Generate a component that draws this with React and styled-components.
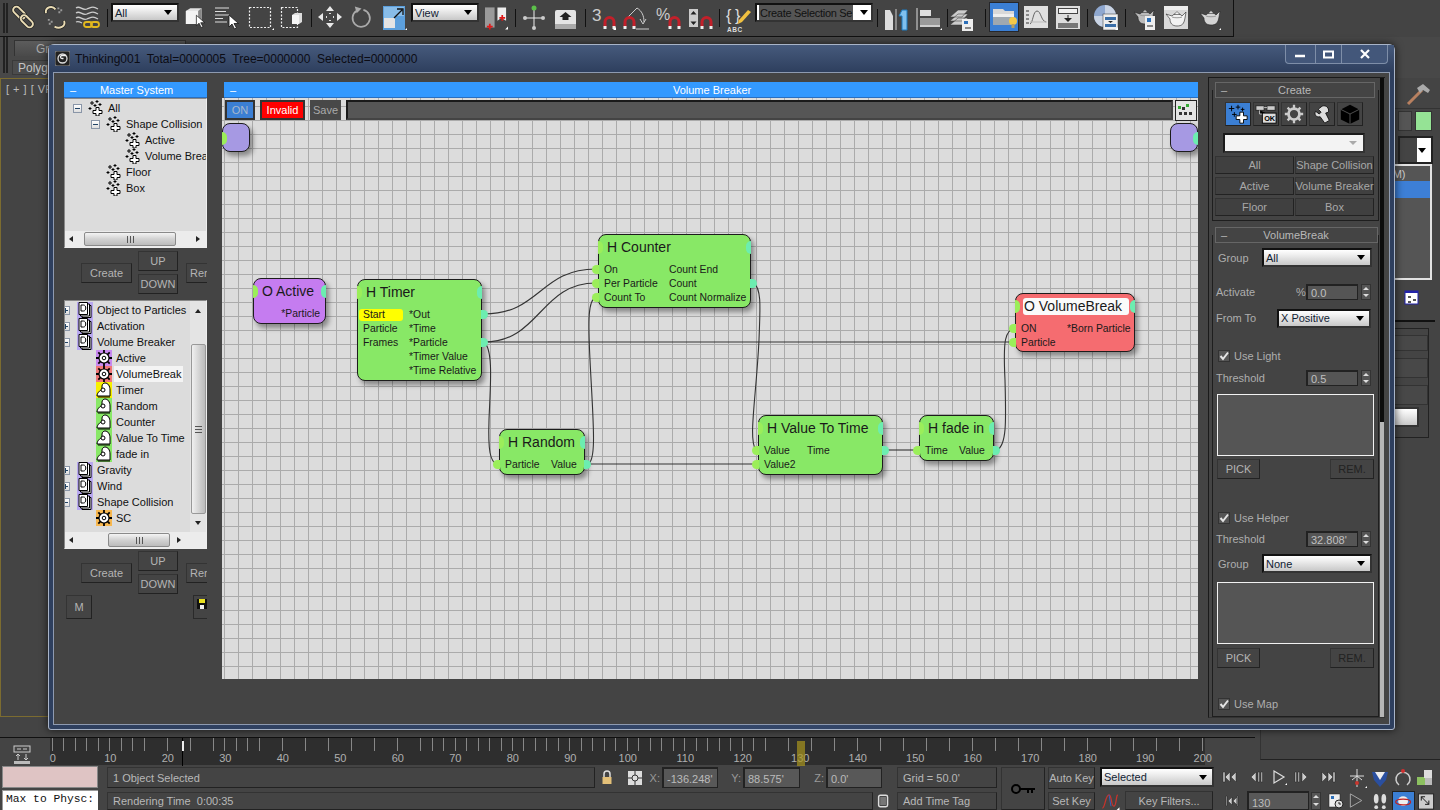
import React from 'react';
import styled, { createGlobalStyle } from 'styled-components';

const Global = createGlobalStyle`
  html, body { margin: 0; padding: 0; background: #444; overflow: hidden; }
  * { box-sizing: border-box; }
`;

const Root = styled.div`
  position: relative; width: 1440px; height: 810px; overflow: hidden; display: flex; flex-direction: column;
  background: #444; color: #b8b8b8; font: 11px/14px "Liberation Sans", Arial, sans-serif;
`;

/* ---------- main toolbar ---------- */
const Toolbar = styled.div`
  width: 1234px; height: 37px; flex: none; display: flex; align-items: flex-start; padding-top: 3px;
  border-bottom: 1px solid #111; border-right: 1px solid #111; background: #444;
`;
const Tool = styled.div`
  flex: none; width: ${p => p.$w || 24}px; height: 26px; margin-left: ${p => p.$ml || 0}px; margin-top: 1px;
  svg { display: block; width: 100%; height: 100%; overflow: visible; }
`;
const ToolActive = styled(Tool)`
  height: 30px; margin-top: -1px; background: #3b7fd4; border: 1px solid #26272b;
`;
const Sep = styled.div`
  flex: none; width: 1px; height: 18px; margin: 6px 0 0 ${p => p.$ml}px; background: #111;
`;
const Grip = styled.div`
  flex: none; width: 5px; height: ${p => p.$h || 30}px; margin-left: 3px; border-left: 2px solid #222; border-right: 2px solid #222;
`;
const Drop = styled.div`
  flex: none; display: flex; align-items: center; justify-content: space-between; width: ${p => p.$w}px; height: ${p => p.$h || 19}px;
  margin-left: ${p => p.$ml || 0}px; padding: 0 5px 0 2px; color: #123; font-size: 11px; white-space: nowrap; overflow: hidden;
  background: linear-gradient(#fff, #f0f0f0 30%, #c8c8c8); border: 2px solid #111; border-right-color: #333; border-bottom-color: #333;
  &::after { content: ""; flex: none; border: 4px solid transparent; border-top: 5px solid #000; border-bottom: 0; margin-left: 4px; }
`;
const MarkedDrop = styled(Drop)`
  padding-right: 3px;
  background: #fff;
  &::after { margin-left: 7px; }
`;
const DropMark = styled.span`
  background: #555; color: #111; flex: 1; padding: 1px 0 1px 1px; overflow: hidden; letter-spacing: -.3px;
`;

/* ---------- application background ---------- */
const Ribbon = styled.div`
  height: 41px; flex: none; display: flex; background: #484848;
`;
const RibbonCol = styled.div`
  display: flex; flex-direction: column; margin-left: 4px; padding-top: 3px; width: 174px;
`;
const RibbonTab = styled.div`
  height: 16px; background: linear-gradient(#5c5c5c, #4a4a4a); border: 1px solid #333; border-bottom: 0; margin-left: 2px; padding: 1px 0 0 21px; color: #aaa; font-size: 12px;
`;
const RibbonBtn = styled.div`
  height: 15px; margin-top: 4px; padding-left: 5px; color: #c4c4c4; font-size: 12px; background: #4c4c4c; border: 1px solid #3a3a3a;
`;
const Work = styled.div`
  flex: none; height: 687px; display: flex;
`;
const WorkLeft = styled.div`
  width: 1260px; flex: none; display: flex; flex-direction: column; height: 687px;
`;
const Viewport = styled.div`
  flex: 1; min-height: 0; margin-bottom: 20px; border: 1px solid #7c6c30; border-right: 0; padding: 3px 0 0 5px; color: #bbb; background: #444;
  word-spacing: 1px;
`;
const CmdPanel = styled.div`
  flex: 1; display: flex; flex-direction: column; height: 682px; border-left: 1px solid #333; border-bottom: 1px solid #222; background: #444;
`;
const CmdTabs = styled.div`
  height: 31px; padding: 4px 0 0 143px; border-bottom: 1px solid #333;
`;
const CmdTab = styled.div`
  width: 28px; height: 24px;
  svg { display: block; width: 100%; height: 100%; }
`;
const SwatchRow = styled.div`
  display: flex; margin-top: 2px; padding-left: 137px; gap: 3px;
`;
const NameField = styled.div`
  width: 14px; height: 20px; background: #555; border: 1px solid #333;
`;
const Swatch = styled.div`
  width: 17px; height: 20px; background: #95e395; border: 1px solid #333;
`;
const CmdDrop = styled(Drop)`
  margin: 5px 0 0 137px; width: 35px; height: 28px; background: linear-gradient(90deg,#444 0,#444 17px,#fff 17px); border: 2px solid #222; justify-content: flex-end;
`;
const CmdList = styled.div`
  margin: 0 0 0 130px; width: 41px; height: 116px; border: 2px solid #e2e2e2; border-left: 0; background: #555; padding-top: 1px; display: flex; flex-direction: column; color: #ccc;
`;
const CmdListText = styled.span`
  margin-left: -2px;
`;
const CmdSel = styled.div`
  height: 17px; background: #3d7fd6;
`;
const CmdIcon = styled.div`
  width: 16px; height: 16px; margin: 10px 0 0 143px;
  svg { display: block; }
`;
const CmdLine = styled.div`
  height: 2px; background: #111; margin: 14px 5px 0 0;
`;
const CmdBox = styled.div`
  margin: 6px 11px 0 0; flex: none; height: 110px; border: 1px solid #222; border-left: 0; padding-top: 6px; display: flex; flex-direction: column; gap: 7px;
`;
const CmdRow = styled.div`
  width: 167px; height: ${p => p.$h}px; border: 1px solid #333; background: #484848;
`;
const CmdBoxDrop = styled(Drop)`
  margin-top: -5px; height: 20px; border-color: #333;
`;

/* ---------- timeline ---------- */
const Timeline = styled.div`
  height: 28px; flex: none; width: 1255px; display: flex; background: #444; border-top: 1px solid #111; position: relative;
`;
const TimeIcon = styled.div`
  width: 50px; flex: none; padding: 6px 0 0 11px;
  svg { display: block; }
`;
const Ruler = styled.div`
  width: 1155px; flex: none; background: #2e2e2e; position: relative; padding-top: 13px;
  background-image: repeating-linear-gradient(90deg, transparent 0 2px, #888 2px 3px, transparent 3px 11.5px);
  background-size: 100% 13px; background-repeat: no-repeat;
`;
const Labels = styled.div`
  display: flex; margin-left: -26px; width: 1207.5px; color: #b0b0b0; font-size: 11px; line-height: 14px;
`;
const Lab = styled.div`
  width: 57.5px; flex: none; text-align: center;
`;
const Scrub = styled.div`
  position: absolute; left: 132px; top: 0; width: 1px; height: 28px; background: #000;
  &::before { content: ""; position: absolute; left: 0; top: 3px; width: 2px; height: 10px; background: #eee; }
`;
const KeyMark = styled.div`
  position: absolute; left: 747px; top: 3px; width: 8px; height: 25px; background: rgba(170,150,30,.7);
`;

/* ---------- status row ---------- */
const Status = styled.div`
  flex: none; height: 45px; display: flex; background: #444;
`;
const Console = styled.div`
  width: 96px; margin-left: 2px; flex: none; display: flex; flex-direction: column; padding-top: 1px;
`;
const Pink = styled.div`
  height: 22px; background: #dfc4c4; border: 1px solid #888;
`;
const Listener = styled.div`
  flex: 1; margin-top: 2px; background: #fff; color: #111; font: 11.3px/17px "Liberation Mono", monospace; padding-left: 3px; white-space: nowrap; overflow: hidden; border: 1px solid #999; border-bottom: 0; border-right: 0;
`;
const StatCol = styled.div`
  flex: none; display: flex; flex-direction: column; width: ${p => p.$w}px; margin-left: ${p => p.$ml || 0}px; gap: ${p => p.$gap ?? 4}px; padding-top: 2px;
`;
const StatRow = styled.div`
  display: flex; align-items: center; height: ${p => p.$h || 21}px; flex: none;
`;
const Prompt = styled.div`
  flex: none; display: flex; align-items: center; width: ${p => p.$w}px; height: ${p => p.$h || 21}px; padding-left: 5px; background: #444; border: 1px solid #333; border-bottom-color: #222; border-right-color: #222; white-space: nowrap; color: #b8b8b8;
`;
const Axis = styled.span`
  flex: none; width: ${p => p.$w}px; text-align: right; padding-right: 2px; color: #999; font-size: 11px;
`;
const Coord = styled.div`
  flex: none; width: ${p => p.$w}px; height: ${p => p.$h || 21}px; margin-left: ${p => p.$ml || 0}px; padding: 3px 0 0 3px; background: #585858; border: 1px solid #222; border-top-width: 2px; border-left-width: 2px; color: #bbb; white-space: nowrap; overflow: hidden;
`;
const Mini = styled.div`
  flex: none; width: ${p => p.$w || 16}px; height: ${p => p.$h || 16}px; margin-left: ${p => p.$ml || 0}px;
  svg { display: block; width: 100%; height: 100%; overflow: visible; }
`;
const MiniOn = styled(Mini)`
  background: #3b7fd4; border: 1px solid #222;
`;
const KeyBtn = styled.div`
  flex: none; width: 44px; height: 43px; margin: 2px 0 0 4px; background: #444; border: 1px solid #333; border-right-color: #222; border-bottom-color: #222; display: flex; align-items: center; justify-content: center;
  svg { display: block; }
`;
const StatBtn = styled.div`
  flex: none; display: flex; align-items: center; justify-content: center; width: ${p => p.$w || '100%'}; height: ${p => p.$h || 20}px; margin-left: ${p => p.$ml || 0}px; background: #444; border: 1px solid #333; border-right-color: #222; border-bottom-color: #222; color: #b8b8b8; white-space: nowrap;
`;
const Spin = styled.div`
  flex: none; width: 10px; height: ${p => p.$h || 16}px; margin-left: ${p => p.$ml || 0}px; background: #555; border: 1px solid #333; display: flex; flex-direction: column; align-items: center; justify-content: space-around;
  &::before, &::after { content: ""; border: 3px solid transparent; }
  &::before { border-bottom: 3px solid #ddd; border-top: 0; }
  &::after { border-top: 3px solid #ddd; border-bottom: 0; }
`;

/* ---------- floating window ---------- */
const Win = styled.div`
  position: absolute; left: 48px; top: 44px; width: 1347px; height: 686px; display: flex; flex-direction: column;
  background: linear-gradient(90deg, #2e3f5e, #34476a 50%, #2e3f5e); border: 1px solid #a8b4c8; border-radius: 6px 6px 3px 3px; box-shadow: 0 0 8px rgba(0,0,0,.7);
`;
const TitleBar = styled.div`
  position: relative; height: 27px; flex: none; display: flex; align-items: center; padding-left: 6px; gap: 5px; color: #0c0c14; font-size: 12px; white-space: pre;
  background: linear-gradient(#465a7c, #2e3f5e);
`;
const Logo = styled.div`
  width: 15px; height: 15px; flex: none;
  svg { display: block; }
`;
const Caption = styled.div`
  flex: 1;
`;
const WinBtns = styled.div`
  display: flex; align-self: flex-start; height: 19px; margin-right: 6px; border: 1px solid #7e8ea8; border-top: 0; border-radius: 0 0 4px 4px; background: #43577a;
`;
const WinBtn = styled.div`
  width: ${p => p.$w}px; display: flex; align-items: center; justify-content: center; border-left: 1px solid #7e8ea8;
  &:first-child { border-left: 0; }
`;
const WinBody = styled.div`
  flex: 1; min-height: 0; margin: 0 4px 4px; display: flex; background: #444; border: 1px solid #8e9ab0; padding: 4px 4px 4px 10px;
`;

/* ---------- left column ---------- */
const LeftCol = styled.div`
  width: 143px; flex: none; margin-top: 5px; display: flex; flex-direction: column; overflow: hidden;
`;
const BlueHead = styled.div`
  flex: none; height: 16px; display: flex; align-items: center; padding-left: 6px; color: #fff; background: #3399ff; margin-left: ${p => p.$ml || 0}px;
  border-bottom: 1px solid #2a6fc0;
`;
const HeadText = styled.div`
  flex: 1; text-align: center; padding-right: ${p => p.$pr || 10}px;
`;
const TreeBox = styled.div`
  flex: none; height: ${p => p.$h}px; display: flex; flex-direction: column; background: #dcdcdc; border: 1px solid; border-color: #888 #eee #eee #888; color: #111;
`;
const TreeInner = styled.div`
  flex: 1; min-height: 0; display: flex; overflow: hidden;
`;
const TreeRows = styled.div`
  flex: 1; min-width: 0; padding-top: ${p => p.$pt}px; overflow: hidden;
`;
const TreeRow = styled.div`
  height: 16px; display: flex; align-items: center; white-space: nowrap; padding-left: ${p => p.$pl}px;
`;
const Expander = styled.div`
  flex: none; width: 9px; height: 9px; margin-right: ${p => p.$mr ?? 6}px; margin-left: ${p => p.$ml || 0}px; background: linear-gradient(#fff, #ddd); border: 1px solid #8a96a8; position: relative;
  &::before { content: ""; position: absolute; left: 1px; right: 1px; top: 3px; height: 1px; background: #246; }
  ${p => p.$plus && `&::after { content: ""; position: absolute; top: 1px; bottom: 1px; left: 3px; width: 1px; background: #246; }`}
`;
const NodeIcon = styled.div`
  flex: none; width: 16px; height: 16px; margin-right: 4px; background: ${p => p.$bg || 'transparent'};
  svg { display: block; }
`;
const RowText = styled.span`
  padding: 0 2px; margin-left: -2px; background: ${p => p.$sel ? '#f4f4f4' : 'transparent'}; line-height: 16px; font-size: 11px;
`;
const HScroll = styled.div`
  flex: none; height: 16px; display: flex; align-items: center; background: #ececec;
`;
const ArrowL = styled.div`
  flex: none; margin-left: 4px; border: 3px solid transparent; border-right: 4px solid #222; border-left: 0;
`;
const ArrowR = styled.div`
  flex: none; border: 3px solid transparent; border-left: 4px solid #222; border-right: 0;
`;
const Thumb = styled.div`
  flex: none; width: ${p => p.$w}px; height: 14px; margin: 0 ${p => p.$mr}px 0 ${p => p.$ml}px; background: linear-gradient(#f4f4f4, #d2d2d2 50%, #bcbcbc); border: 1px solid #8a8a8a; border-radius: 2px; display: flex; align-items: center; justify-content: center;
  &::before { content: ""; width: 7px; height: 7px; background: repeating-linear-gradient(90deg, #555 0 1px, transparent 1px 3px); }
`;
const VScroll = styled.div`
  flex: none; width: 16px; display: flex; flex-direction: column; align-items: center; background: #e4e4e4; padding-top: 8px;
`;
const ArrowU = styled.div`
  flex: none; border: 3px solid transparent; border-bottom: 4px solid #222; border-top: 0;
`;
const ArrowD = styled.div`
  flex: none; margin-top: 7px; border: 3px solid transparent; border-top: 4px solid #222; border-bottom: 0;
`;
const VThumb = styled.div`
  flex: none; width: 15px; height: 170px; margin-top: 31px; background: linear-gradient(90deg, #f0f0f0, #d0d0d0 60%, #bcbcbc); border: 1px solid #999; border-radius: 2px; display: flex; align-items: center; justify-content: center;
  &::before { content: ""; width: 7px; height: 7px; background: repeating-linear-gradient(#555 0 1px, transparent 1px 3px); }
`;
const BtnArea = styled.div`
  flex: none; display: flex; height: 43px; margin: ${p => p.$mt}px 0 ${p => p.$mb || 0}px; align-items: center; padding-left: 17px;
`;
const UpDown = styled.div`
  flex: none; display: flex; flex-direction: column; gap: 3px; margin: 0 8px 0 6px;
`;
const Btn = styled.div`
  flex: none; display: flex; align-items: center; justify-content: center; width: ${p => p.$w}px; height: ${p => p.$h || 20}px; background: #444; color: ${p => p.$dim ? '#222' : '#b4b4b4'}; border: 1px solid #343434; border-right-color: #222; border-bottom-color: #222; white-space: nowrap;
`;
const ClippedBtn = styled(Btn)`
  justify-content: flex-start; padding-left: 3px; border-right: 0;
`;
const BottomBar = styled.div`
  display: flex; justify-content: space-between; align-items: flex-start; margin: 1px 0 0 2px;
`;
const Floppy = styled.div`
  width: 20px; height: 24px; flex: none; margin-right: -6px; background: #444; border: 1px solid #2a2a2a; padding: 3px;
  svg { display: block; }
`;

/* ---------- graph ---------- */
const GraphCol = styled.div`
  width: 976px; flex: none; margin: 5px 0 0 15px; display: flex; flex-direction: column; height: 597px;
`;
const Canvas = styled.div`
  flex: 1; position: relative; background-color: #dcdcdc; overflow: hidden;
  background-image: linear-gradient(90deg, #ababab 1px, transparent 1px), linear-gradient(#ababab 1px, transparent 1px);
  background-size: 14px 14px; background-position: 2px 0, 0 8px;
`;
const GraphBar = styled.div`
  display: flex; gap: 5px; padding: 2px 0 0 3px; align-items: flex-start; position: relative;
`;
const BarBtn = styled.div`
  flex: none; width: ${p => p.$w}px; height: 20px; display: flex; align-items: center; justify-content: center; background: ${p => p.$bg}; color: ${p => p.$fg}; border: 2px solid #333; ${p => p.$bare && 'border: 0;'}
`;
const BarField = styled.div`
  flex: 1; height: 20px; background: #565656; border: 2px solid #1a1a1a; border-bottom-color: #444; border-right-color: #444; margin-right: 1px;
`;
const BarIcon = styled.div`
  flex: none; width: 22px; height: 21px; background: #e4e4e4; border: 1px solid #222; margin-left: -4px; margin-right: 1px;
  svg { display: block; }
`;
const Wires = styled.svg`
  position: absolute; left: 0; top: 0; pointer-events: none;
`;
const GNode = styled.div`
  position: absolute; left: ${p => p.$x - 222}px; top: ${p => p.$y - 98}px; width: ${p => p.$w}px; height: ${p => p.$h}px;
  background: ${p => p.$c}; border: 1px solid #1c1c1c; border-radius: 8px; box-shadow: 3px 4px 5px rgba(0,0,0,.38); color: #1a1a1a; font-size: 10.4px; line-height: 14px;
`;
const GTitleRow = styled.div`
  position: relative; height: 28px; padding: 4px 0 0 8px; font-size: 14px; line-height: 17px; white-space: nowrap;
`;
const GTitle = styled.span`
  display: ${p => p.$hl ? 'block' : 'inline'}; ${p => p.$hl && 'background: #fafafa; border-radius: 3px; width: 106px; margin: 0 0 0 -1px; padding: 0 0 0 1px;'}
`;
const EdgePort = styled.div`
  position: absolute; top: 6px; ${p => p.$right ? 'right: -1px' : 'left: -1px'}; width: 5px; height: 13px; background: ${p => p.$right ? '#6cedb0' : '#9bee5a'};
  border-radius: ${p => p.$right ? '5px 0 0 5px' : '0 5px 5px 0'};
`;
const GRow = styled.div`
  position: relative; height: 14px; padding-left: 5px; display: grid; grid-template-columns: ${p => p.$split}px 1fr; white-space: nowrap;
`;
const GRight = styled.span`
  text-align: ${p => p.$end ? 'right' : 'left'}; padding-right: ${p => p.$end ? 5 : 0}px;
`;
const GLeft = styled.span`
  ${p => p.$hl && 'background: #ffff00; border-radius: 3px; margin: 1px 6px 1px -4px; padding-left: 4px; line-height: 11px;'}
`;
const RowPort = styled.div`
  position: absolute; top: 2px; ${p => p.$out ? 'right: -7px' : 'left: -7px'}; width: 7px; height: 9px; background: ${p => p.$out ? '#6cedb0' : '#9bee5a'};
  border-radius: ${p => p.$out ? '0 5px 5px 0' : '5px 0 0 5px'};
`;
const CornerNode = styled.div`
  position: absolute; left: ${p => p.$x - 222}px; top: ${p => p.$y - 98}px; width: 28px; height: 29px; background: #a699e3; border: 1px solid #1c1c1c; border-radius: 8px; box-shadow: 3px 4px 5px rgba(0,0,0,.38);
  &::after { content: ""; position: absolute; ${p => p.$right ? 'right: -1px;' : 'left: -1px;'} top: 8px; width: 5px; height: 13px; background: ${p => p.$right ? '#6cedb0' : '#9bee5a'}; border-radius: ${p => p.$right ? '5px 0 0 5px' : '0 5px 5px 0'}; }
`;

/* ---------- right column ---------- */
const RightCol = styled.div`
  width: 177px; flex: none; margin: 0 0 2px 10px; display: flex; background: #444; border: 1px solid #1a1a1a; border-right: 0; border-bottom: 1px solid #333; min-height: 0;
`;
const RightContent = styled.div`
  flex: 1; min-width: 0; padding: 4px 1px 0 3px; display: flex; flex-direction: column;
`;
const RightScroll = styled.div`
  width: 4px; margin-right: 1px; flex: none; display: flex; flex-direction: column; background: #0c0c0c;
  &::after { content: ""; margin-top: 344px; flex: 1; background: #b6b6b6; }
`;
const RollHead = styled.div`
  position: relative; flex: none; height: 16px; margin: ${p => p.$mt || 0}px ${p => p.$mr}px 0 3px; display: flex; align-items: center; padding-left: 5px; background: #444; border: 1px solid #666; color: #b8b8b8;
`;
const RollFrame = styled.div`
  margin-top: -8px; padding: 12px 1px ${p => p.$pb || 0}px; border: 1px solid #1e1e1e; border-top: 0; flex: ${p => p.$grow ? 1 : 'none'}; display: flex; flex-direction: column; min-height: 0;
`;
const PanelTabs = styled.div`
  display: flex; gap: 2px; margin: 0 0 0 11px;
`;
const PanelTab = styled.div`
  flex: none; width: 26px; height: 24px; background: ${p => p.$on ? '#3b7fd4' : '#444'}; border: 1px solid #333; border-right-color: #222; border-bottom-color: #222;
  svg { display: block; width: 100%; height: 100%; }
`;
const NameBox = styled.div`
  height: 20px; margin: 7px 0 0 9px; width: 142px; background: #f3f3f3; border: 2px solid #1a1a1a; border-bottom-color: #333; border-right-color: #333; display: flex; justify-content: flex-end; align-items: center; padding-right: 6px;
  &::after { content: ""; border: 4px solid transparent; border-top: 4px solid #aaa; border-bottom: 0; }
`;
const SetGrid = styled.div`
  display: grid; grid-template-columns: 79px 79px; gap: 3px 1px; margin: 3px 0 0 1px;
`;
const SetBtn = styled.div`
  height: 18px; display: flex; align-items: center; justify-content: center; border: 1px solid #333; border-bottom-color: #222; border-right-color: #222; background: #404040; white-space: nowrap; color: #a8a8a8;
`;
const Form = styled.div`
  display: flex; align-items: center; height: ${p => p.$h || 16}px; margin-top: ${p => p.$mt}px; padding-left: ${p => p.$pl ?? 3}px; flex: none; white-space: nowrap;
`;
const Label = styled.span`
  flex: none; width: ${p => p.$w}px; color: #aeaeae; text-align: ${p => p.$end ? 'right' : 'left'};
`;
const Field = styled.div`
  flex: none; width: 52px; height: 16px; padding: 1px 0 0 3px; background: #555; border: 1px solid #222; border-top-width: 2px; border-left-width: 2px; color: #c0c0c0; line-height: 13px; margin-left: ${p => p.$ml || 0}px; overflow: hidden;
`;
const Check = styled.div`
  flex: none; width: 12px; height: 12px; margin: 0 4px 0 1px; background: #555; border: 1px solid #333; display: flex; align-items: center; justify-content: center;
  svg { display: block; }
`;
const OutBox = styled.div`
  flex: none; width: 157px; height: 62px; margin: ${p => p.$mt}px 0 0 3px; background: #555; border: 1px solid #f2f2f2;
`;
const BtnRow = styled.div`
  flex: none; display: flex; justify-content: space-between; margin: ${p => p.$mt}px 3px 0 3px;
`;

/* ---------- icon drawings ---------- */
const Link = ({ a, b }) => (
  <>
    <rect x={a} y={b} width="15" height="7" rx="3.5" fill="none" stroke="#222" strokeWidth="3.4" transform={`rotate(45 ${a + 7.5} ${b + 3.5})`} />
    <rect x={a} y={b} width="15" height="7" rx="3.5" fill="none" stroke="#eadcb4" strokeWidth="2" transform={`rotate(45 ${a + 7.5} ${b + 3.5})`} />
  </>
);
const Cursor = ({ x, y }) => (
  <path transform={`translate(${x} ${y})`} d="M0 0v12l3-3 2.5 5 2-1-2.5-4.5h4.5z" fill="#fff" stroke="#111" strokeWidth=".8" />
);
const Fly = () => <path d="M24 23v3h-3z" fill="#fff" />;
const Magnet = ({ x, y }) => (
  <g transform={`translate(${x} ${y})`}>
    <path d="M1 11V6a4.5 4.5 0 0 1 9 0v5" fill="none" stroke="#c2202a" strokeWidth="3" />
    <path d="M-.5 10h3v3h-3zM8.500 10h3v3h-3z" fill="#eee" />
  </g>
);
const Pot = ({ c = '#e4e4e4' }) => (
  <g>
    <path d="M8 10c2-3 8-3 10 0l4-4-1 6c-1 6-3 8-8 8s-7-3-7-7L2 8z" fill={c} stroke="#222" strokeWidth=".6" />
    <path d="M10 8.500l3-3 3 3z" fill={c} stroke="#222" strokeWidth=".5" />
    <path d="M8 11c2 1 8 1 10 0" stroke="#999" fill="none" />
  </g>
);

const Icons = {
  link: <svg viewBox="0 0 24 26"><Link a={0} b={5} /><Link a={8} b={14} /></svg>,
  unlink: <svg viewBox="0 0 24 26"><path d="M2 9c-1-7 7-8 10-4M21 17c2 6-5 9-10 6" fill="none" stroke="#222" strokeWidth="3.4" /><path d="M2 9c-1-7 7-8 10-4M21 17c2 6-5 9-10 6" fill="none" stroke="#eadcb4" strokeWidth="2" /><path d="M14 3h2v2h-2zM17 5h2v2h-2zM15 7h2v2h-2zM4 15h2v2H4zM7 17h2v2H7zM5 19h2v2H5z" fill="#999" /></svg>,
  bind: <svg viewBox="0 0 24 26"><path d="M0 4c4-3 6 3 11 1s6-3 11 0M0 9c4-3 6 3 11 1s6-3 11 0M0 14c4-3 6 3 11 1s6-3 11 0M0 18c2-1 4 0 6 1" fill="none" stroke="#ccc" strokeWidth="1.3" /><rect x="8" y="18" width="8" height="5" rx="2.500" fill="none" stroke="#e2b81e" strokeWidth="1.800" /><rect x="15" y="18" width="8" height="5" rx="2.500" fill="none" stroke="#e2b81e" strokeWidth="1.800" /></svg>,
  select: <svg viewBox="0 0 24 26"><path d="M1 6l5-3h13v14l-4 4H1z" fill="#e2e2e2" /><path d="M1 6h14v15H1z" fill="#f4f4f4" /><path d="M15 6l4-3v14l-4 4z" fill="#888" /><Cursor x={13} y={11} /></svg>,
  selName: <svg viewBox="0 0 24 26"><path d="M0 4h14M0 7.500h11M0 11h14M0 14.500h8M0 18h12" stroke="#ddd" strokeWidth="1.200" /><Cursor x={14} y={11} /></svg>,
  rect: <svg viewBox="0 0 26 26"><rect x="1.500" y="3.500" width="21" height="20" fill="none" stroke="#eee" strokeWidth="1.200" strokeDasharray="2 1.500" /><path d="M26 24v2h-2z" fill="#fff" /></svg>,
  window: <svg viewBox="0 0 24 26"><rect x="1.500" y="3.500" width="16" height="20" fill="none" stroke="#eee" strokeWidth="1.200" strokeDasharray="2 1.500" /><path d="M12 11l3-2h7v9l-3 2h-7z" fill="#ddd" /><path d="M12 11h7v9h-7z" fill="#f6f6f6" /></svg>,
  move: <svg viewBox="0 0 24 26"><path d="M12 2l4 5h-8zM12 24l4-5h-8zM0 13l5-4v8zM24 13l-5-4v8z" fill="#e8e8e8" /><path d="M12 9v1M12 16v1M8 13h1M15 13h1" stroke="#ddd" strokeWidth="2" /></svg>,
  rotate: <svg viewBox="0 0 24 26"><path d="M14 5.500a9 9 0 1 1-7 1" fill="none" stroke="#aaa" strokeWidth="1.800" /><path d="M5 2l7 2-5 5z" fill="#aaa" /></svg>,
  scale: <svg viewBox="0 0 24 26"><rect x="0" y="2" width="22" height="24" fill="#5c9fdc" /><rect x="1" y="13" width="11" height="11" fill="#e4e4e4" /><path d="M1 3h20v9H12v2H1z" fill="#88bce8" /><path d="M11 14l8-8M14 5h6v6" fill="none" stroke="#111" strokeWidth="1.300" /><path d="M24 24v2h-2z" fill="#fff" /></svg>,
  named: <svg viewBox="0 0 24 26"><rect x="0" y="3" width="10" height="21" fill="#9a9a9a" /><path d="M13 3h9v14l-5-3-4 3z" fill="#eee" /><path d="M5 20v6M2 23h6M18 11v6M15 14h6" stroke="#e01818" strokeWidth="1.800" /><Fly /></svg>,
  pivot: <svg viewBox="0 0 24 26"><path d="M12 5v18M2 14h20" stroke="#eee" strokeWidth="1" /><circle cx="12" cy="4" r="2.500" fill="#5cc04a" /><circle cx="3" cy="14" r="2" fill="#ccc" /><circle cx="21" cy="14" r="2" fill="#ccc" /><circle cx="12" cy="24" r="2" fill="#ccc" /></svg>,
  manip: <svg viewBox="0 0 24 26"><rect x="1" y="6" width="21" height="19" rx="2" fill="#e4e4e4" /><rect x="1" y="20" width="21" height="5" fill="#aaa" /><path d="M11.500 8l6 5h-3v3h-6v-3h-3z" fill="#222" /></svg>,
  snap3: <svg viewBox="0 0 24 26"><text x="0" y="17" fontFamily="Liberation Sans" fontSize="17" fill="#ccc">3</text><Magnet x={12} y={12} /><Fly /></svg>,
  angle: <svg viewBox="0 0 26 26"><path d="M5 13l9-9M14 4c5 3 7 8 7 14M13 25h13" fill="none" stroke="#ccc" /><path d="M17 15l3 5 3-5" stroke="#ccc" fill="none" /><Magnet x={1} y={12} /></svg>,
  pct: <svg viewBox="0 0 24 26"><text x="0" y="16" fontFamily="Liberation Sans" fontSize="16" fill="#ccc">%</text><Magnet x={13} y={12} /></svg>,
  spin: <svg viewBox="0 0 24 26"><rect x="1" y="5" width="9" height="18" fill="#ccc" /><path d="M5.500 7l3 3.500h-6zM5.500 21l3-3.500h-6z" fill="#222" /><Magnet x={13} y={12} /></svg>,
  abc: <svg viewBox="0 0 26 26"><text x="0" y="17" fontFamily="Liberation Sans" fontSize="16" fill="#ddd">{'{'}</text><text x="9" y="17" fontFamily="Liberation Sans" fontSize="16" fill="#ddd">{'}'}</text><path d="M13 16l9-10 3 2-9 10-4 2z" fill="#f0c040" /><text x="1" y="28" fontFamily="Liberation Sans" fontWeight="bold" fontSize="6.500" letterSpacing=".5" fill="#ddd">ABC</text></svg>,
  mirror: <svg viewBox="0 0 24 26"><path d="M1 6h5l3 6v14H1z" fill="#ddd" /><path d="M12 5v21" stroke="#ccc" /><path d="M23 6h-5l-3 6h3v14h5z" fill="#7fc0ee" stroke="#1d7ac0" /></svg>,
  align: <svg viewBox="0 0 25 26"><path d="M0 4v22" stroke="#ddd" /><rect x="3" y="6" width="11" height="6" fill="#ddd" /><rect x="3" y="14" width="20" height="7" fill="#999" /><rect x="3" y="21" width="20" height="2" fill="#ccc" /><path d="M25 24v2h-2z" fill="#fff" /></svg>,
  layer: <svg viewBox="0 0 26 26"><path d="M0 13l8-7h10l-6 7zM0 17l8-7h10l-6 7zM0 21l8-7h10l-6 7z" fill="#ccc" stroke="#333" strokeWidth=".5" /><rect x="12" y="15" width="11" height="12" fill="#eee" /><rect x="14" y="17" width="4" height="3" fill="#2c6fb8" /><path d="M15 24h6" stroke="#222" /></svg>,
  folder: <svg viewBox="0 0 28 28"><path d="M3 6h10l2 2h9v14H3z" fill="#d8d8d8" /><path d="M3 11h21v11H3z" fill="#9fa8b0" /><path d="M3 11h21v3H3z" fill="#eee" /><circle cx="23" cy="18" r="4" fill="#f4c848" /><rect x="21.500" y="21" width="3" height="4" fill="#b8a060" /></svg>,
  curve: <svg viewBox="0 0 24 26"><rect x="0" y="2" width="24" height="22" fill="#e0e0e0" /><path d="M2 7h3M2 11h3M2 15h3M2 19h3" stroke="#333" /><path d="M6 20c3-1 3-13 7-13s4 10 9 11" fill="none" stroke="#666" /><path d="M6 18h17" stroke="#bbb" /></svg>,
  schem: <svg viewBox="0 0 24 26"><rect x="0" y="2" width="24" height="23" fill="#ddd" /><rect x="2" y="4" width="20" height="6" fill="#444" /><rect x="3" y="5" width="18" height="4" fill="#f0f0f0" /><path d="M12 11v3" stroke="#222" /><path d="M8 14h8l-4 4z" fill="#222" /><rect x="2" y="19" width="20" height="5" fill="#777" /></svg>,
  mat: <svg viewBox="0 0 25 26"><circle cx="11" cy="12" r="11" fill="#8fa8d0" /><path d="M11 1a11 11 0 0 1 11 11H11zM0 12h11v11A11 11 0 0 1 0 12z" fill="#d8dee8" opacity=".8" /><rect x="9" y="10" width="15" height="16" fill="#eee" stroke="#333" strokeWidth=".5" /><path d="M11 13h11v3H11zM11 20h11v3H11z" fill="#3a6ea8" /><path d="M14 17h5l-2.500 2z" fill="#222" /><Fly /></svg>,
  tea1: <svg viewBox="0 0 24 26"><Pot c="#bbb" /><rect x="13" y="12" width="10" height="14" fill="#eee" /><rect x="15" y="14" width="4" height="4" fill="#2c6fb8" /><path d="M15 22h6" stroke="#222" /></svg>,
  tea2: <svg viewBox="0 0 24 26"><rect x="0" y="2" width="24" height="23" fill="#d8d8d8" /><rect x="0" y="2" width="24" height="4" fill="#eee" /><g transform="translate(0 2)"><Pot c="#f2f2f2" /></g></svg>,
  tea3: <svg viewBox="0 0 24 26"><g transform="translate(1 1)"><Pot c="#d4d4d4" /></g><path d="M24 24v2h-2z" fill="#fff" /></svg>,
  hammer: <svg viewBox="0 0 28 24"><path d="M4 22L18 8" stroke="#b88060" strokeWidth="3" /><path d="M13 6l6-4 7 6-2 3-5-3-3 3z" fill="#aaa" /></svg>,
};

const Sparkle = () => (
  <svg width="16" height="16" viewBox="0 0 16 16">
    <path d="M4 1v4M2 3h4M9 0v3M7.500 1.500h3M2 7v3M.5 8.500h3M7 4v3M5.500 5.500h3M12 3v3M10.500 4.500h3" stroke="#000" fill="none" />
    <path d="M8 7.500h3v3h3v3h-3v2.500H8v-2.500H5v-3h3z" fill="#fff" stroke="#000" />
  </svg>
);
const DocStack = () => (
  <svg width="16" height="16" viewBox="0 0 16 16">
    <path d="M5 3.500h9v12H5z" fill="#fff" stroke="#000" />
    <path d="M3.500 2h9v12h-9z" fill="#fff" stroke="#000" />
    <path d="M2 .5h8.500v12H2z" fill="#fff" stroke="#000" />
    <path d="M4 3h2.500c3 0 3 6 0 6H4z" fill="none" stroke="#000" />
  </svg>
);
const Gear = () => (
  <svg width="16" height="16" viewBox="0 0 16 16">
    <circle cx="8" cy="8" r="5" fill="#fff" stroke="#000" strokeWidth="1.2" />
    <path d="M8 0v3M8 13v3M0 8h3M13 8h3M2.300 2.300l2 2M11.700 11.700l2 2M13.700 2.300l-2 2M4.300 11.700l-2 2" stroke="#000" strokeWidth="1.800" />
    <circle cx="8" cy="8" r="1.800" fill="none" stroke="#000" />
  </svg>
);
const Helper = () => (
  <svg width="16" height="16" viewBox="0 0 16 16">
    <path d="M1 14c0-3 3-6 5-6V4c0-2 2-3 3-3 3 0 5 3 5 7v6z" fill="#fff" stroke="#000" />
    <circle cx="7" cy="8" r="2" fill="#fff" stroke="#000" />
    <path d="M2 15h12" stroke="#000" />
  </svg>
);
const CheckMark = () => (
  <svg width="10" height="10" viewBox="0 0 10 10"><path d="M1.500 5l2.500 3 5-6.500" fill="none" stroke="#e4e4e4" strokeWidth="2" /></svg>
);

/* ---------- data ---------- */
const nodes = [
  { t: 'O Active', x: 253, y: 278, w: 73, h: 46, c: '#c57cf0', split: 20, rows: [['', '*Particle', 0, 0, 1]] },
  { t: 'H Timer', x: 357, y: 279, w: 125, h: 102, c: '#88e866', split: 46, rows: [['Start', '*Out', 0, 1], ['Particle', '*Time'], ['Frames', '*Particle', 0, 1], ['', '*Timer Value'], ['', '*Time Relative']], hlFirst: true },
  { t: 'H Counter', x: 598, y: 234, w: 153, h: 74, c: '#88e866', split: 65, rows: [['On', 'Count End', 1], ['Per Particle', 'Count', 1, 1], ['Count To', 'Count Normalize', 1]] },
  { t: 'H Random', x: 499, y: 429, w: 86, h: 46, c: '#88e866', split: 46, rows: [['Particle', 'Value', 1, 1]] },
  { t: 'H Value To Time', x: 758, y: 415, w: 125, h: 60, c: '#88e866', split: 43, rows: [['Value', 'Time', 1, 1], ['Value2', '', 1]] },
  { t: 'H fade in', x: 919, y: 415, w: 75, h: 46, c: '#88e866', split: 34, rows: [['Time', 'Value', 1, 1]] },
  { t: 'O VolumeBreak', x: 1015, y: 293, w: 120, h: 59, c: '#f56c70', split: 46, hl: true, rows: [['ON', '*Born Particle', 1], ['Particle', '', 1]] },
];
const wires = [
  'M484 314C540 314 540 269 596 269',
  'M484 342C540 342 540 283 596 283',
  'M484 342L1015 342',
  'M484 342C494 350 490 390 489 420C488 450 490 462 497 464',
  'M596 297C588 300 588 320 590 360C593 420 597 460 588 464',
  'M754 283C762 290 760 310 759 340C756 400 748 440 756 450',
  'M885 450L917 450',
  'M588 464L756 464',
  'M997 450C1007 445 1006 420 1005 380C1003 340 1005 330 1015 328',
];
const list = [
  [0, 'p', 'Object to Particles'], [0, 'p', 'Activation'], [0, 'm', 'Volume Breaker'],
  [1, 'g', 'Active', '#c98af0'], [1, 'g', 'VolumeBreak', '#f07878', true],
  [1, 'h', 'Timer', '#f8f000'], [1, 'h', 'Random', '#88e866'], [1, 'h', 'Counter', '#88e866'],
  [1, 'h', 'Value To Time', '#88e866'], [1, 'h', 'fade in', '#88e866'],
  [0, 'p', 'Gravity'], [0, 'p', 'Wind'], [0, 'm', 'Shape Collision'], [1, 'g', 'SC', '#f8b850'],
];

const Hs = ({ l, w, r }) => (
  <HScroll><ArrowL /><Thumb $ml={l} $w={w} $mr={r} /><ArrowR /></HScroll>
);

const ButtonBlock = ({ mt, mb }) => (
  <BtnArea $mt={mt} $mb={mb}>
    <Btn $w={51}>Create</Btn>
    <UpDown><Btn $w={40}>UP</Btn><Btn $w={40}>DOWN</Btn></UpDown>
    <ClippedBtn $w={21}>Rem</ClippedBtn>
  </BtnArea>
);

const Transport = ({ d }) => <svg viewBox="0 0 16 16"><path d={d} fill="#ccc" stroke="#222" strokeWidth=".5" /></svg>;

export default function App() {
  return (
    <Root>
      <Global />
      <Toolbar>
        <Grip />
        <Tool $ml={4} $w={23}>{Icons.link}</Tool>
        <Tool $ml={9} $w={23}>{Icons.unlink}</Tool>
        <Tool $ml={9} $w={24}>{Icons.bind}</Tool>
        <Sep $ml={7} />
        <Drop $ml={3} $w={68}>All</Drop>
        <Tool $ml={6} $w={21}>{Icons.select}</Tool>
        <Tool $ml={9} $w={24}>{Icons.selName}</Tool>
        <Tool $ml={9} $w={26}>{Icons.rect}</Tool>
        <Tool $ml={6} $w={24}>{Icons.window}</Tool>
        <Sep $ml={7} />
        <Tool $ml={6} $w={24}>{Icons.move}</Tool>
        <Tool $ml={8} $w={23}>{Icons.rotate}</Tool>
        <Tool $ml={10} $w={24}>{Icons.scale}</Tool>
        <Drop $ml={4} $w={68}>View</Drop>
        <Tool $ml={6} $w={23}>{Icons.named}</Tool>
        <Sep $ml={7} />
        <Tool $ml={6} $w={24}>{Icons.pivot}</Tool>
        <Tool $ml={8} $w={24}>{Icons.manip}</Tool>
        <Sep $ml={7} />
        <Tool $ml={6} $w={24}>{Icons.snap3}</Tool>
        <Tool $ml={7} $w={26}>{Icons.angle}</Tool>
        <Tool $ml={7} $w={24}>{Icons.pct}</Tool>
        <Tool $ml={8} $w={24}>{Icons.spin}</Tool>
        <Sep $ml={7} />
        <Tool $ml={6} $w={26}>{Icons.abc}</Tool>
        <MarkedDrop $ml={3} $w={118}><DropMark>Create Selection Se</DropMark></MarkedDrop>
        <Sep $ml={4} />
        <Tool $ml={6} $w={24}>{Icons.mirror}</Tool>
        <Tool $ml={9} $w={25}>{Icons.align}</Tool>
        <Sep $ml={5} />
        <Tool $ml={2} $w={26}>{Icons.layer}</Tool>
        <Sep $ml={9} />
        <ToolActive $ml={3} $w={30}>{Icons.folder}</ToolActive>
        <Tool $ml={5} $w={24}>{Icons.curve}</Tool>
        <Tool $ml={8} $w={24}>{Icons.schem}</Tool>
        <Sep $ml={7} />
        <Tool $ml={6} $w={25}>{Icons.mat}</Tool>
        <Sep $ml={6} />
        <Tool $ml={6} $w={24}>{Icons.tea1}</Tool>
        <Tool $ml={8} $w={24}>{Icons.tea2}</Tool>
        <Tool $ml={9} $w={24}>{Icons.tea3}</Tool>
      </Toolbar>

      <Ribbon>
        <Grip $h={36} />
        <RibbonCol>
          <RibbonTab>Gr</RibbonTab>
          <RibbonBtn>Polyg</RibbonBtn>
        </RibbonCol>
      </Ribbon>

      <Work>
        <WorkLeft>
          <Viewport>[ + ] [ VF</Viewport>
          <Timeline>
            <TimeIcon>
              <svg width="22" height="22" viewBox="0 0 22 22">
                <rect x="3" y="2" width="16" height="6" fill="none" stroke="#ccc" />
                <path d="M6 5h4M12 5h4" stroke="#ccc" />
                <path d="M7 10v6M5 12l2-2 2 2M15 10v6M13 14l2 2 2-2" fill="none" stroke="#ccc" />
                <rect x="3" y="17" width="16" height="3" fill="#bbb" />
              </svg>
            </TimeIcon>
            <Ruler>
              <Labels>
                {Array.from({ length: 21 }, (_, i) => <Lab key={i}>{i * 10}</Lab>)}
              </Labels>
              <Scrub />
              <KeyMark />
            </Ruler>
          </Timeline>
        </WorkLeft>
        <CmdPanel>
          <CmdTabs><CmdTab>{Icons.hammer}</CmdTab></CmdTabs>
          <SwatchRow><NameField /><Swatch /></SwatchRow>
          <CmdDrop $w={35} />
          <CmdList>
            <CmdListText>(M)</CmdListText>
            <CmdSel />
          </CmdList>
          <CmdIcon>
            <svg width="16" height="16" viewBox="0 0 16 16"><rect x="1" y="1" width="13" height="13" fill="#fff" stroke="#22a" /><path d="M1 2h13" stroke="#22a" strokeWidth="2" /><path d="M4 6h3v2H4zM9 9h3v2H9zM4 11h3v2H4z" fill="#555" /></svg>
          </CmdIcon>
          <CmdLine />
          <CmdBox>
            <CmdRow $h={16} />
            <CmdRow $h={20} />
            <CmdRow $h={20} />
            <CmdBoxDrop $w={158} />
          </CmdBox>
        </CmdPanel>
      </Work>

      <Status>
        <Console>
          <Pink />
          <Listener>Max to Physc:</Listener>
        </Console>
        <StatCol $w={775} $ml={9}>
          <StatRow>
            <Prompt $w={488}>1 Object Selected</Prompt>
            <Mini $ml={6} $w={12}>
              <svg viewBox="0 0 12 16"><path d="M3 7V4a3 3 0 0 1 6 0v3" fill="none" stroke="#ddd" strokeWidth="1.500" /><rect x="1.500" y="7" width="9" height="7" fill="#e4c078" /></svg>
            </Mini>
            <Mini $ml={15} $w={14}>
              <svg viewBox="0 0 14 14"><rect width="14" height="14" fill="#ddd" /><circle cx="7" cy="7" r="3" fill="none" stroke="#333" /><path d="M7 0v4M7 10v4M0 7h4M10 7h4" stroke="#333" /></svg>
            </Mini>
            <Axis $w={20}>X:</Axis>
            <Coord $w={56}>-136.248'</Coord>
            <Axis $w={25}>Y:</Axis>
            <Coord $w={57}>88.575'</Coord>
            <Axis $w={26}>Z:</Axis>
            <Coord $w={56}>0.0'</Coord>
          </StatRow>
          <StatRow $h={18}>
            <Prompt $w={766} $h={18}>Rendering Time&nbsp; 0:00:35</Prompt>
            <Mini $ml={4} $w={13}>
              <svg viewBox="0 0 16 16"><rect x="2" y="1" width="11" height="14" rx="2" fill="none" stroke="#ddd" strokeWidth="1.800" /><rect x="4" y="3" width="7" height="10" fill="#777" /></svg>
            </Mini>
          </StatRow>
        </StatCol>
        <StatCol $w={100} $ml={15}>
          <Prompt $w={100}>Grid = 50.0'</Prompt>
          <Prompt $w={100} $h={18}>Add Time Tag</Prompt>
        </StatCol>
        <KeyBtn>
          <svg width="26" height="14" viewBox="0 0 26 14"><circle cx="6" cy="7" r="4" fill="none" stroke="#000" strokeWidth="2" /><path d="M10 7h15M18 7v4M22 7v4" stroke="#000" strokeWidth="2" /></svg>
        </KeyBtn>
        <StatCol $w={47} $ml={3} $gap={3}>
          <StatBtn $h={22}>Auto Key</StatBtn>
          <StatBtn $h={18}>Set Key</StatBtn>
        </StatCol>
        <StatCol $w={114} $ml={5} $gap={4}>
          <Drop $w={114} $h={20}>Selected</Drop>
          <StatRow $h={19}>
            <Mini $w={20} $h={19}>
              <svg viewBox="0 0 20 20"><path d="M2 18c3 0 3-14 7-14 3 0 2 12 5 12s2-10 4-12" fill="none" stroke="#c8342c" strokeWidth="1.300" /><path d="M9 4l2 12" stroke="#3a5fc0" /><path d="M20 17v3h-3z" fill="#fff" /></svg>
            </Mini>
            <StatBtn $w="88px" $ml={5} $h={19}>Key Filters...</StatBtn>
          </StatRow>
        </StatCol>
        <StatCol $w={120} $ml={7} $gap={4}>
          <StatRow $h={20}>
            <Mini $ml={1}><Transport d="M1 3v10h2V3zM8 3L3 8l5 5zM14 3L9 8l5 5z" /></Mini>
            <Mini $ml={11}><Transport d="M7 3L2 8l5 5zM9 3h1.500v10H9zM12 3h1.500v10H12z" /></Mini>
            <Mini $ml={6}><svg viewBox="0 0 16 16"><path d="M3 2l10 6-10 6z" fill="#444" stroke="#ddd" strokeWidth="1.200" /><path d="M16 14v2h-2z" fill="#fff" /></svg></Mini>
            <Mini $ml={6}><Transport d="M9 3l5 5-5 5zM2 3h1.500v10H2zM5 3h1.500v10H5z" /></Mini>
            <Mini $ml={11}><Transport d="M15 3v10h-2V3zM8 3l5 5-5 5zM2 3l5 5-5 5z" /></Mini>
          </StatRow>
          <StatRow $h={19}>
            <Mini $ml={3} $w={16}><Transport d="M2 3v10h1V3zM4 8l4-4v8zM9 8l4-4v8zM13 3h1v10h-1z" /></Mini>
            <Coord $w={62} $h={19} $ml={7}>130</Coord>
            <Spin $ml={2} $h={18} />
            <Mini $ml={7} $w={16}>
              <svg viewBox="0 0 16 16"><rect x="1" y="1" width="11" height="13" fill="#eee" stroke="#222" strokeWidth=".5" /><path d="M3 3h3v3H3z" fill="#2c6fb8" /><circle cx="11" cy="11" r="4" fill="#ddd" stroke="#222" /><path d="M11 9v2h2" stroke="#222" fill="none" /></svg>
            </Mini>
          </StatRow>
        </StatCol>
        <StatCol $w={95} $ml={5} $gap={3}>
          <StatRow>
            <Mini $ml={1} $w={20} $h={20}>
              <svg viewBox="0 0 20 20"><path d="M10 1v18M3 8h14M5 12l5-4 5 4" fill="none" stroke="#ddd" /><circle cx="10" cy="15" r="2" fill="#c8342c" /><path d="M20 18v2h-2z" fill="#fff" /></svg>
            </Mini>
            <Mini $ml={3} $w={20} $h={20}>
              <svg viewBox="0 0 20 20"><path d="M2 4h16l-2 8-6 7-6-7z" fill="#2a4fa0" /><path d="M5 4h10l-5 8z" fill="#eee" /></svg>
            </Mini>
            <Mini $ml={3} $w={20} $h={20}>
              <svg viewBox="0 0 20 20"><path d="M6 17a7 7 0 1 1 8 0" fill="none" stroke="#ccc" strokeWidth="1.500" /><circle cx="10" cy="3" r="2" fill="#d03030" /></svg>
            </Mini>
            <Mini $ml={2} $w={20} $h={20}>
              <svg viewBox="0 0 20 20"><rect x="2" y="9" width="8" height="8" fill="#8cc060" /><rect x="9" y="2" width="8" height="8" fill="#ddd" /><rect x="10" y="10" width="7" height="7" fill="#bbb" /></svg>
            </Mini>
          </StatRow>
          <StatRow $h={20}>
            <Mini $w={20} $h={19} $ml={1}>
              <svg viewBox="0 0 20 20"><path d="M3 2l12 7-12 7z" fill="none" stroke="#aaa" /></svg>
            </Mini>
            <Mini $ml={3} $w={20} $h={19}>
              <svg viewBox="0 0 20 20"><ellipse cx="6" cy="7" rx="2.500" ry="5" fill="#ddd" /><ellipse cx="14" cy="7" rx="2.500" ry="5" fill="#ddd" /><circle cx="6" cy="16" r="2" fill="#ddd" /><circle cx="14" cy="16" r="2" fill="#ddd" /></svg>
            </Mini>
            <MiniOn $ml={2} $w={23} $h={21}>
              <svg viewBox="0 0 23 23"><circle cx="11" cy="11" r="6" fill="#eee" /><ellipse cx="11" cy="12" rx="9" ry="3.500" fill="none" stroke="#c02020" strokeWidth="1.500" /></svg>
            </MiniOn>
            <Mini $ml={1} $w={20} $h={19}>
              <svg viewBox="0 0 20 20"><rect x="2" y="2" width="16" height="16" fill="#ccc" stroke="#222" /><path d="M5 5l8 8M5 9V5h4M13 9v4H9" fill="none" stroke="#111" /></svg>
            </Mini>
          </StatRow>
        </StatCol>
      </Status>

      <Win>
        <TitleBar>
          <Logo>
            <svg width="15" height="15" viewBox="0 0 15 15"><rect width="15" height="15" rx="2" fill="#222" stroke="#888" /><circle cx="7.500" cy="7.500" r="4.500" fill="none" stroke="#ddd" strokeWidth="1.300" /><path d="M11 4.500H7C5 4.500 5 7.500 7 7.500h1.500" fill="none" stroke="#eee" strokeWidth="1.300" /></svg>
          </Logo>
          <Caption>Thinking001  Total=0000005  Tree=0000000  Selected=0000000</Caption>
          <WinBtns>
            <WinBtn $w={29}><svg width="11" height="8" viewBox="0 0 11 8"><path d="M0 6h10" stroke="#fff" strokeWidth="2.500" /></svg></WinBtn>
            <WinBtn $w={26}><svg width="11" height="9" viewBox="0 0 11 9"><rect x="1" y="1.500" width="9" height="6" fill="none" stroke="#fff" strokeWidth="2" /></svg></WinBtn>
            <WinBtn $w={46}><svg width="10" height="10" viewBox="0 0 10 10"><path d="M1 1l8 8M9 1l-8 8" stroke="#fff" strokeWidth="2.200" /></svg></WinBtn>
          </WinBtns>
        </TitleBar>
        <WinBody>
          <LeftCol>
            <BlueHead><span>–</span><HeadText>Master System</HeadText></BlueHead>
            <TreeBox $h={150}>
              <TreeRows $pt={1}>
                <TreeRow $pl={8}><Expander /><NodeIcon><Sparkle /></NodeIcon><RowText>All</RowText></TreeRow>
                <TreeRow $pl={26}><Expander /><NodeIcon><Sparkle /></NodeIcon><RowText>Shape Collision</RowText></TreeRow>
                <TreeRow $pl={60}><NodeIcon><Sparkle /></NodeIcon><RowText>Active</RowText></TreeRow>
                <TreeRow $pl={60}><NodeIcon><Sparkle /></NodeIcon><RowText>Volume Brea</RowText></TreeRow>
                <TreeRow $pl={41}><NodeIcon><Sparkle /></NodeIcon><RowText>Floor</RowText></TreeRow>
                <TreeRow $pl={41}><NodeIcon><Sparkle /></NodeIcon><RowText>Box</RowText></TreeRow>
              </TreeRows>
              <Hs l={11} w={92} r={20} />
            </TreeBox>
            <ButtonBlock mt={3} mb={6} />
            <TreeBox $h={249}>
              <TreeInner>
                <TreeRows $pt={1}>
                  {list.map(([lvl, kind, text, bg, sel]) => (
                    <TreeRow key={text + lvl} $pl={lvl ? 31 : 0}>
                      {!lvl && <Expander $ml={-4} $mr={7} $plus={kind === 'p'} />}
                      <NodeIcon $bg={bg || '#b8a8f0'}>
                        {kind === 'g' ? <Gear /> : kind === 'h' ? <Helper /> : <DocStack />}
                      </NodeIcon>
                      <RowText $sel={sel}>{text}</RowText>
                    </TreeRow>
                  ))}
                </TreeRows>
                <VScroll><ArrowU /><VThumb /><ArrowD /></VScroll>
              </TreeInner>
              <Hs l={35} w={62} r={7} />
            </TreeBox>
            <ButtonBlock mt={2} />
            <BottomBar>
              <Btn $w={26} $h={24}>M</Btn>
              <Floppy>
                <svg width="10" height="10" viewBox="0 0 10 10"><rect width="10" height="10" fill="#111" /><rect x="2" y="0" width="6" height="4" fill="#e8e020" /><rect x="3" y="6" width="4" height="4" fill="#eee" /></svg>
              </Floppy>
            </BottomBar>
          </LeftCol>

          <GraphCol>
            <BlueHead $ml={2}><span>–</span><HeadText $pr={10}>Volume Breaker</HeadText></BlueHead>
            <Canvas>
              <GraphBar>
                <BarBtn $w={30} $bg="#3b7fd4" $fg="#a8b8cc">ON</BarBtn>
                <BarBtn $w={45} $bg="#ff0000" $fg="#fff">Invalid</BarBtn>
                <BarBtn $w={31} $bg="#484848" $fg="#aaa" $bare>Save</BarBtn>
                <BarField />
                <BarIcon>
                  <svg width="20" height="19" viewBox="0 0 20 19"><path d="M2 5h3v3H2zM10 3h3v3h-3z" fill="#3a3" /><path d="M6 6h3v3H6zM3 11h3v3H3zM8 11h3v3H8zM13 11h3v3h-3z" fill="#333" /></svg>
                </BarIcon>
              </GraphBar>
              <Wires width="976" height="581" viewBox="222 98 976 581">
                {wires.map(d => <path key={d} d={d} fill="none" stroke="#333" strokeWidth="1.100" />)}
              </Wires>
              <CornerNode $x={222} $y={123} />
              <CornerNode $x={1170} $y={123} $right />
              {nodes.map(n => (
                <GNode key={n.t} $x={n.x} $y={n.y} $w={n.w} $h={n.h} $c={n.c}>
                  <GTitleRow>
                    <GTitle $hl={n.hl}>{n.t}</GTitle>
                    <EdgePort />
                    <EdgePort $right />
                  </GTitleRow>
                  {n.rows.map(([l, r, inP, outP, end], i) => (
                    <GRow key={i} $split={n.split}>
                      <GLeft $hl={n.hlFirst && i === 0}>{l}</GLeft>
                      <GRight $end={end}>{r}</GRight>
                      {inP ? <RowPort /> : null}
                      {outP ? <RowPort $out /> : null}
                    </GRow>
                  ))}
                </GNode>
              ))}
            </Canvas>
          </GraphCol>

          <RightCol>
            <RightContent>
              <RollHead $mr={4}><span>–</span><HeadText $pr={12}>Create</HeadText></RollHead>
              <RollFrame $pb={4}>
                <PanelTabs>
                  <PanelTab $on><svg viewBox="0 0 26 24"><path d="M15 10h4v4h4v4h-4v4h-4v-4h-4v-4h4z" fill="#fff" stroke="#000" /><path d="M6 3v6M3 6h6M13 2v5M10.500 4.500h5M9 10v5M6.500 12.500h5M18 5v4M16 7h4" stroke="#000" /></svg></PanelTab>
                  <PanelTab><svg viewBox="0 0 26 24"><rect x="2" y="3" width="9" height="5" fill="#ccc" stroke="#222" /><rect x="14" y="3" width="9" height="5" fill="#ccc" stroke="#222" /><path d="M11 5h3M6 8v4h9" stroke="#ccc" /><rect x="9" y="11" width="15" height="11" fill="#ddd" stroke="#000" /><text x="11" y="20" fontFamily="Liberation Sans" fontSize="8" fontWeight="bold" fill="#000">OK</text></svg></PanelTab>
                  <PanelTab><svg viewBox="0 0 26 24"><circle cx="13" cy="12" r="6" fill="none" stroke="#ccc" strokeWidth="3" /><path d="M13 2v4M13 18v4M3 12h4M19 12h4M6 5l3 3M17 16l3 3M20 5l-3 3M9 16l-3 3" stroke="#ccc" strokeWidth="2.500" /></svg></PanelTab>
                  <PanelTab><svg viewBox="0 0 26 24"><path d="M15 3c4 0 6 4 5 7l-3 1 4 8-5 3-5-7c-4 1-7-2-5-6l4 3 2-2-3-3c2-2 4-4 6-4z" fill="#ddd" stroke="#111" /></svg></PanelTab>
                  <PanelTab><svg viewBox="0 0 26 24"><path d="M13 2l10 5v11l-10 5-10-5V7z" fill="#000" /><path d="M3 7l10 5 10-5M13 12v11" stroke="#555" fill="none" /></svg></PanelTab>
                </PanelTabs>
                <NameBox />
                <SetGrid>
                  {['All', 'Shape Collision', 'Active', 'Volume Breaker', 'Floor', 'Box'].map(t => <SetBtn key={t}>{t}</SetBtn>)}
                </SetGrid>
              </RollFrame>
              <RollHead $mt={6} $mr={1}><span>–</span><HeadText $pr={12}>VolumeBreak</HeadText></RollHead>
              <RollFrame $grow>
                <Form $mt={1} $h={19} $pl={4}>
                  <Label $w={44}>Group</Label>
                  <Drop $w={110}>All</Drop>
                </Form>
                <Form $mt={17} $pl={2}>
                  <Label $w={80}>Activate</Label>
                  <Label $w={8} $end>%</Label>
                  <Field $ml={2}>0.0</Field>
                  <Spin $ml={3} />
                </Form>
                <Form $mt={8} $h={20} $pl={2}>
                  <Label $w={61}>From To</Label>
                  <Drop $w={94}>X Positive</Drop>
                </Form>
                <Form $mt={21} $h={14}>
                  <Check><CheckMark /></Check>
                  <Label $w={60}>Use Light</Label>
                </Form>
                <Form $mt={7} $pl={2}>
                  <Label $w={90}>Threshold</Label>
                  <Field>0.5</Field>
                  <Spin $ml={3} />
                </Form>
                <OutBox $mt={8} />
                <BtnRow $mt={3}>
                  <Btn $w={43}>PICK</Btn>
                  <Btn $w={44} $dim>REM.</Btn>
                </BtnRow>
                <Form $mt={32} $h={14}>
                  <Check><CheckMark /></Check>
                  <Label $w={60}>Use Helper</Label>
                </Form>
                <Form $mt={6} $pl={2}>
                  <Label $w={90}>Threshold</Label>
                  <Field>32.808'</Field>
                  <Spin $ml={3} />
                </Form>
                <Form $mt={7} $h={19} $pl={4}>
                  <Label $w={44}>Group</Label>
                  <Drop $w={110}>None</Drop>
                </Form>
                <OutBox $mt={9} />
                <BtnRow $mt={4}>
                  <Btn $w={43}>PICK</Btn>
                  <Btn $w={44} $dim>REM.</Btn>
                </BtnRow>
                <Form $mt={29} $h={14}>
                  <Check><CheckMark /></Check>
                  <Label $w={60}>Use Map</Label>
                </Form>
              </RollFrame>
            </RightContent>
            <RightScroll />
          </RightCol>
        </WinBody>
      </Win>
    </Root>
  );
}
